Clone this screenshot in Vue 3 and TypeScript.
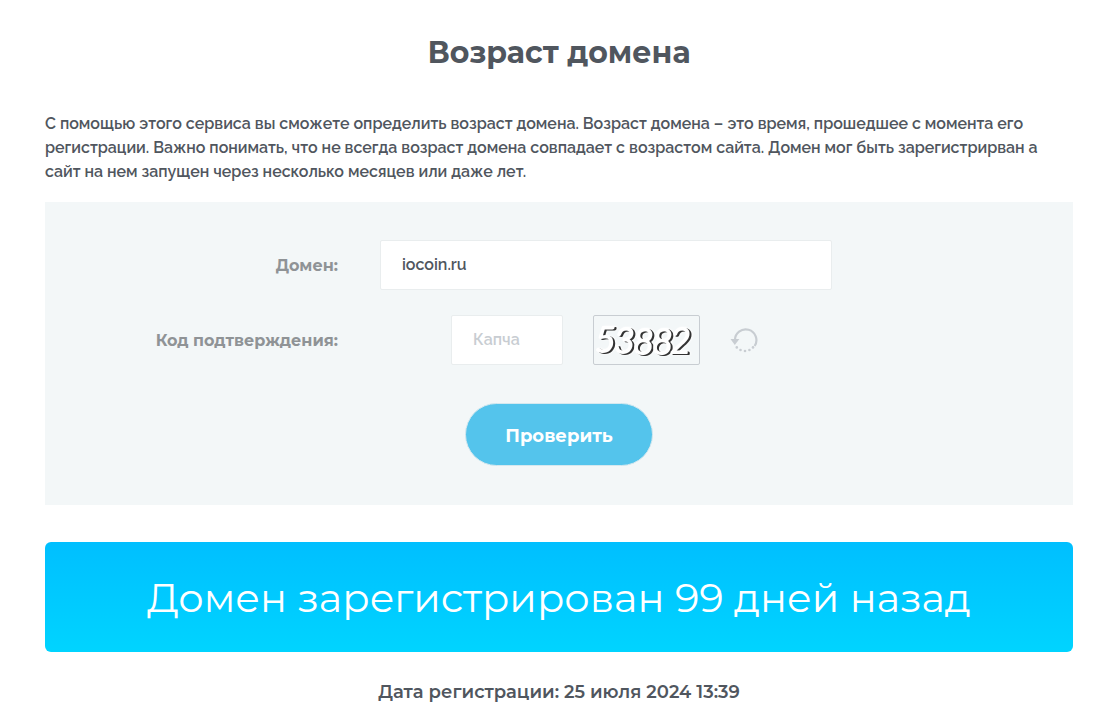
<script setup lang="ts">
import { ref } from 'vue'

const domain = ref<string>('iocoin.ru')
const captcha = ref<string>('')
const code = '53882'
const intro: string[] = [
  'С помощью этого сервиса вы сможете определить возраст домена. Возраст домена – это время, прошедшее с момента его',
  'регистрации. Важно понимать, что не всегда возраст домена совпадает с возрастом сайта. Домен мог быть зарегистрирван а',
  'сайт на нем запущен через несколько месяцев или даже лет.',
]
</script>

<template>
  <main class="page">
    <h1 class="title">Возраст домена</h1>
    <p class="intro">
      <template v-for="(line, i) in intro" :key="i"><br v-if="i > 0">{{ line }}</template>
    </p>

    <form class="panel" @submit.prevent>
      <div class="row">
        <label class="label" for="domain">Домен:</label>
        <input id="domain" v-model="domain" class="field field-domain" type="text">
      </div>
      <div class="row">
        <label class="label" for="captcha">Код подтверждения:</label>
        <div class="captcha">
          <input id="captcha" v-model="captcha" class="field field-code" type="text" placeholder="Капча">
          <svg class="code" viewBox="0 0 105 48" role="img" aria-label="Код подтверждения">
            <text class="digits" x="1 20 39 58 76" y="36 37 38 38 37">{{ code }}</text>
          </svg>
          <button class="refresh" type="button" aria-label="Обновить код">
            <svg viewBox="0 0 28 26" width="28" height="26" fill="none">
              <path d="M5 13.5A10.7 10.7 0 1 1 24.6 19" stroke="#c8cdd2" stroke-width="2.2" />
              <path d="M0.5 12H9.4L4.8 18Z" fill="#c8cdd2" />
              <g fill="#c8cdd2">
                <circle cx="6.8" cy="20.4" r="1.3" />
                <circle cx="10.5" cy="23" r="1.3" />
                <circle cx="15" cy="24" r="1.3" />
                <circle cx="19.4" cy="23" r="1.3" />
                <circle cx="23" cy="20.4" r="1.3" />
              </g>
            </svg>
          </button>
        </div>
      </div>
      <button class="submit" type="submit">Проверить</button>
    </form>

    <div class="result">Домен зарегистрирован 99 дней назад</div>
    <p class="date">Дата регистрации: 25 июля 2024 13:39</p>
  </main>
</template>

<style>
body {
  margin: 0;
  background: #fff;
}
</style>

<style scoped>
.page {
  padding: 33px 47px 16px 45px;
  color: #50565e;
  font-family: Montserrat, Inter, "Open Sans", sans-serif;
}
.title {
  margin: 0;
  font-size: 30px;
  line-height: 40px;
  font-weight: 700;
  text-align: center;
}
.intro {
  margin: 39px 0 18px;
  font: 600 16px/24px Raleway, Roboto, sans-serif;
  white-space: nowrap;
}
.panel {
  display: flex;
  flex-direction: column;
  gap: 25px;
  padding: 38px 0 39px;
  background: #f3f7f8;
}
.row {
  display: grid;
  grid-template-columns: 293px 452px;
  column-gap: 42px;
  align-items: center;
}
.label {
  color: #8f9396;
  font-size: 16px;
  font-weight: 700;
  text-align: right;
}
.field {
  box-sizing: border-box;
  height: 50px;
  padding: 0 21px 2px;
  border: 1px solid #e9edee;
  border-radius: 2px;
  background: #fff;
  color: #50565e;
  font: 600 16px/24px Raleway, Roboto, sans-serif;
  outline: none;
}
.field::placeholder {
  color: #c8cdd2;
  opacity: 1;
}
.field-domain {
  width: 100%;
}
.field-code {
  width: 112px;
}
.captcha {
  display: flex;
  align-items: center;
  padding-left: 71px;
}
.code {
  width: 105px;
  height: 48px;
  margin: 0 30px;
  border: 1px solid #c8cdd2;
  border-radius: 2px;
}
.digits {
  fill: #fff;
  stroke: #fff;
  stroke-width: 2;
  stroke-linejoin: round;
  font: italic 300 36px/1 Lato, sans-serif;
  filter: drop-shadow(2px 1px 0 #333) drop-shadow(1px 0 1px #fff);
}
.refresh {
  display: flex;
  padding: 0;
  border: 0;
  background: none;
  cursor: pointer;
}
.submit {
  align-self: center;
  height: 63px;
  margin-top: 13px;
  padding: 2px 39px 0;
  border: 1px solid #d4e8ef;
  border-radius: 32px;
  background: #54c4ec;
  color: #fff;
  font: 700 18px/24px Montserrat, Inter, sans-serif;
  cursor: pointer;
}
.result {
  margin-top: 37px;
  padding: 30px 16px 28px;
  border-radius: 6px;
  background: linear-gradient(#00bfff, #00d4ff);
  color: #fff;
  font-size: 40px;
  line-height: 52px;
  font-weight: 400;
  text-align: center;
}
.date {
  margin: 28px 0 0;
  font-size: 18px;
  line-height: 24px;
  font-weight: 600;
  text-align: center;
}
</style>
